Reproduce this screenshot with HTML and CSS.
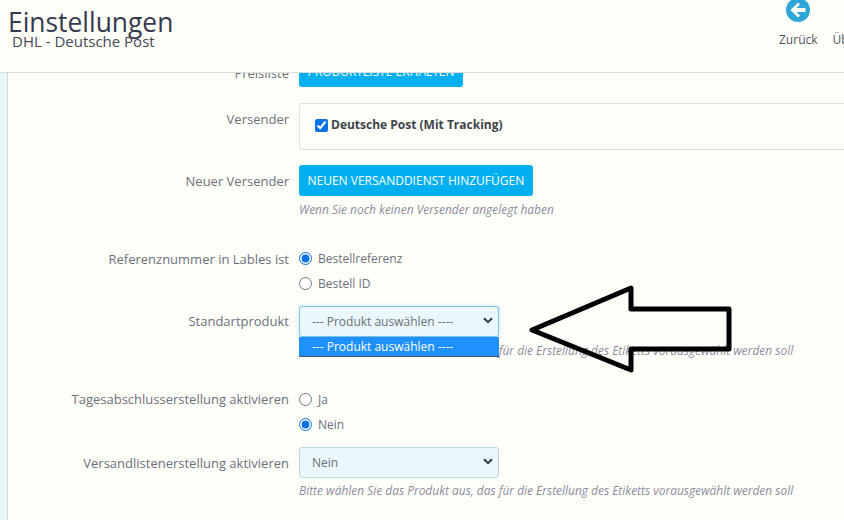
FILE: index.html
```html
<!DOCTYPE html>
<html lang="de">
<head>
    <meta charset="UTF-8">
    <title>Einstellungen - DHL - Deutsche Post</title>
    <link rel="stylesheet" href="styles.css">
</head>
<body>
    <header class="page-head">
        <div class="page-titles">
            <h1>Einstellungen</h1>
            <div class="page-sub">DHL - Deutsche Post</div>
        </div>
        <nav class="toolbar">
            <a class="tool">
                <svg class="tool-icon" width="24" height="24" viewBox="0 0 24 24">
                    <circle cx="12" cy="12" r="12" fill="#2fa6d8"/>
                    <path d="M12 4.500 4.500 12l7.500 7.500 2-2-3.700-3.500H19.500v-4H10.300L14 6.500z" fill="#fffffa"/>
                </svg>
                <span>Zurück</span>
            </a>
            <a class="tool tool-next"><span>Übersicht</span></a>
        </nav>
    </header>

    <main class="page-body">
        <form class="settings">
            <div class="row row-price">
                <label class="row-label">Preisliste</label>
                <div class="row-field"><button type="button" class="btn">PRODUKTLISTE ERHALTEN</button></div>
            </div>

            <div class="row row-carrier">
                <label class="row-label">Versender</label>
                <div class="row-field">
                    <div class="carrier-box">
                        <label class="carrier-item"><input type="checkbox" checked> Deutsche Post (Mit Tracking)</label>
                    </div>
                </div>
            </div>

            <div class="row row-new">
                <label class="row-label">Neuer Versender</label>
                <div class="row-field">
                    <button type="button" class="btn">NEUEN VERSANDDIENST HINZUFÜGEN</button>
                    <p class="hint">Wenn Sie noch keinen Versender angelegt haben</p>
                </div>
            </div>

            <div class="row row-ref">
                <label class="row-label">Referenznummer in Lables ist</label>
                <div class="row-field radios">
                    <label class="radio"><input type="radio" name="ref" checked> Bestellreferenz</label>
                    <label class="radio"><input type="radio" name="ref"> Bestell ID</label>
                </div>
            </div>

            <div class="row row-product">
                <label class="row-label">Standartprodukt</label>
                <div class="row-field">
                    <div class="select-wrap">
                        <div class="select is-open">--- Produkt auswählen ----<svg class="chev" width="10" height="7" viewBox="0 0 10 7"><path d="M1 1.200 5 5.200l4-4" fill="none" stroke="#343a40" stroke-width="2"/></svg></div>
                        <div class="select-menu">--- Produkt auswählen ----</div>
                    </div>
                    <p class="hint">Bitte wählen Sie das Produkt aus, das für die Erstellung des Etiketts vorausgewählt werden soll</p>
                </div>
            </div>

            <div class="row row-daily">
                <label class="row-label">Tagesabschlusserstellung aktivieren</label>
                <div class="row-field radios">
                    <label class="radio"><input type="radio" name="daily"> Ja</label>
                    <label class="radio"><input type="radio" name="daily" checked> Nein</label>
                </div>
            </div>

            <div class="row row-list">
                <label class="row-label">Versandlistenerstellung aktivieren</label>
                <div class="row-field">
                    <div class="select-wrap">
                        <div class="select">Nein<svg class="chev" width="10" height="7" viewBox="0 0 10 7"><path d="M1 1.200 5 5.200l4-4" fill="none" stroke="#343a40" stroke-width="2"/></svg></div>
                    </div>
                    <p class="hint hint-list">Bitte wählen Sie das Produkt aus, das für die Erstellung des Etiketts vorausgewählt werden soll</p>
                </div>
            </div>
        </form>
    </main>

    <svg class="arrow" width="844" height="520" viewBox="0 0 844 520">
        <path d="M532 330 631 288v21h98v40h-98v21z" fill="none" stroke="#000" stroke-width="5" stroke-linejoin="round"/>
    </svg>
</body>
</html>
```

FILE: styles.css
```css
* {
    box-sizing: border-box;
}

html, body {
    height: 100%;
}

body {
    margin: 0;
    width: 844px;
    height: 520px;
    overflow: hidden;
    position: relative;
    display: flex;
    flex-direction: column;
    background-color: #fffffa;
    font-family: "Open Sans", sans-serif;
    font-size: 12px;
    color: #6c6f7a;
}

/* head */
.page-head {
    flex: none;
    height: 73px;
    display: flex;
    justify-content: space-between;
    border-bottom: 1px solid #d9dedb;
    background-color: #fffffa;
    position: relative;
    z-index: 2;
    overflow: hidden;
}

.page-titles {
    padding: 4px 0 0 8px;
}

h1 {
    margin: 0;
    font-size: 26.400px;
    font-weight: 400;
    line-height: 36px;
    color: #363a50;
}

.page-sub {
    margin: -8px 0 0 4px;
    font-size: 15px;
    line-height: 18px;
    color: #454a55;
}

.toolbar {
    display: flex;
    gap: 15px;
    width: 65px;
    flex: none;
    white-space: nowrap;
}

.tool {
    display: flex;
    flex-direction: column;
    align-items: center;
    font-size: 12px;
    line-height: 16px;
    color: #4f5360;
}

.tool-icon {
    margin-top: -2px;
    margin-bottom: 10px;
}

.tool-next {
    padding-top: 32px;
}

/* form */
.page-body {
    flex: 1;
    min-height: 0;
    overflow: hidden;
    padding-left: 7px;
    background-color: #e9f7fb;
}

.settings {
    display: flow-root;
    height: 100%;
    background-color: #fffffa;
    border-left: 1px solid #c9dcdc;
    margin: 0;
}

.row {
    display: flex;
    gap: 10px;
}

.row-label {
    flex: none;
    width: 281px;
    font-size: 13px;
    text-align: right;
    line-height: 17px;
    white-space: nowrap;
}

.row-field {
    flex: 1;
    min-width: 0;
}

.row-price {
    margin-top: -17px;
}

.row-price .row-label {
    padding-top: 9px;
}

.row-carrier {
    margin-top: 16px;
}

.row-carrier .row-label {
    padding-top: 8px;
}

.row-new {
    margin-top: 15px;
}

.row-new .row-label {
    padding-top: 8px;
}

.row-ref {
    margin-top: 33px;
}

.row-ref .row-label {
    padding-top: 1px;
}

.row-product {
    margin-top: 14px;
}

.row-product .row-label {
    padding-top: 7px;
}

.row-daily {
    margin-top: 33px;
}

.row-list {
    margin-top: 14px;
}

.row-list .row-label {
    padding-top: 8px;
}

.btn {
    display: block;
    height: 31px;
    padding: 0 8.500px;
    border: none;
    border-radius: 3px;
    background-color: #00aff0;
    color: #fff;
    font-family: inherit;
    font-size: 12px;
    font-weight: 500;
    white-space: nowrap;
}

.carrier-box {
    height: 47px;
    border: 1px solid #dfe2df;
    border-right: none;
    border-radius: 3px 0 0 3px;
    padding: 14px 0 0 15px;
}

.carrier-item {
    display: flex;
    align-items: center;
    gap: 3px;
    font-size: 12px;
    font-weight: 700;
    line-height: 14px;
    color: #3e424b;
}

.carrier-item input {
    width: 13px;
    height: 13px;
    margin: 0;
    accent-color: #0b72e8;
}

.hint {
    margin: 7px 0 0;
    font-size: 11.950px;
    line-height: 14px;
    font-style: italic;
    color: #8d8c9e;
    white-space: nowrap;
}

.hint-list {
    margin-top: 6px;
}

.radios {
    display: flex;
    flex-direction: column;
    gap: 8px;
}

.radio {
    display: flex;
    align-items: center;
    gap: 6px;
    height: 17px;
    line-height: 17px;
}

.radio input {
    width: 13px;
    height: 13px;
    margin: 0;
    accent-color: #0b72e8;
}

.select-wrap {
    width: 200px;
    position: relative;
}

.select {
    height: 31px;
    padding: 0 5px 0 12px;
    display: flex;
    align-items: center;
    justify-content: space-between;
    border: 1px solid #bcd9e0;
    border-radius: 3px;
    background-color: #eaf8fb;
    color: #6c6f7a;
}

.select.is-open {
    border-color: #7cc0e0;
    box-shadow: 0 0 4px 2px #e3f5fc;
}

.chev {
    flex: none;
    margin-top: -2px;
}

.select-menu {
    position: absolute;
    left: 0;
    top: 31px;
    width: 200px;
    height: 20px;
    padding-left: 13px;
    background-color: #1e90ff;
    border-bottom: 1px solid #4a5a72;
    color: #fff;
    font-weight: 500;
    line-height: 19px;
}

.arrow {
    position: absolute;
    left: 0;
    top: 0;
    z-index: 3;
    pointer-events: none;
}
```
